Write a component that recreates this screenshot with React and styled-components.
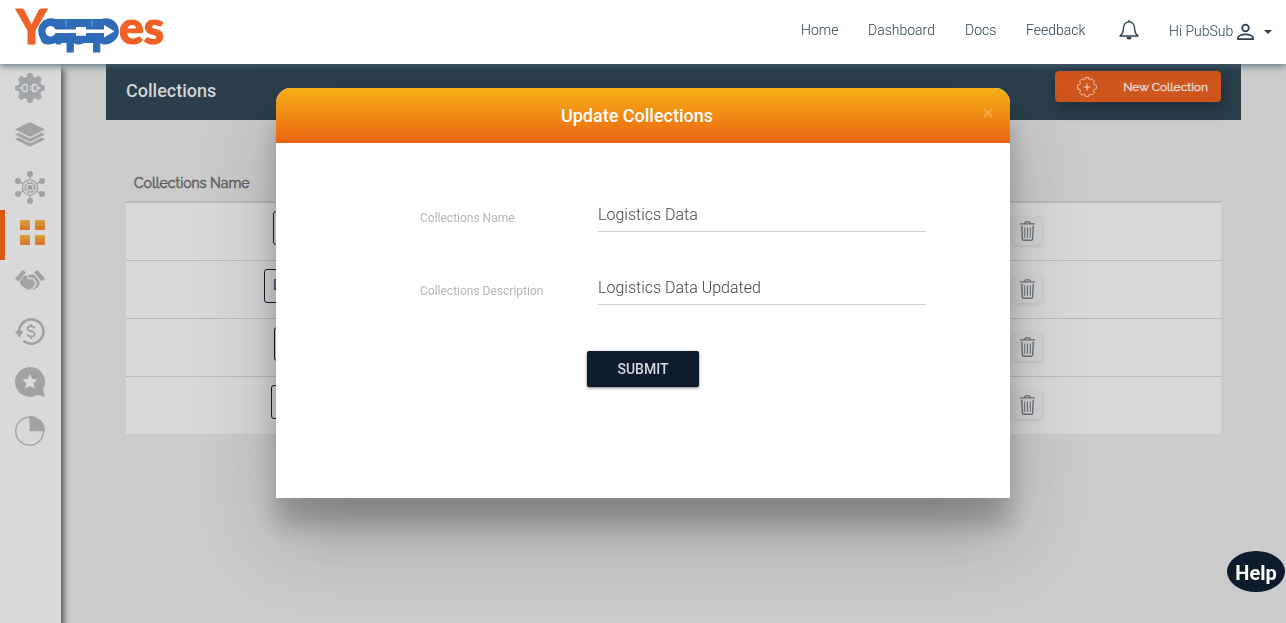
import React from "react";
import styled, { createGlobalStyle } from "styled-components";

const GlobalStyle = createGlobalStyle`
  * { box-sizing: border-box; }
  html, body { margin: 0; padding: 0; }
  body {
    background: #cbcbcb;
    font-family: Roboto, "Liberation Sans", sans-serif;
    overflow: hidden;
  }
  svg { display: block; overflow: visible; }
`;

const Page = styled.div`
  height: 100vh;
  display: flex;
  flex-direction: column;
`;

const Header = styled.header`
  position: relative;
  z-index: 3;
  flex: none;
  height: 64px;
  display: flex;
  justify-content: space-between;
  background: #fff;
  box-shadow: 0 1px 8px #46606f;
`;

const Nav = styled.nav`
  display: flex;
  align-items: flex-start;
  padding: 20px 14px 0 0;
  color: #2c4251;
  font-weight: 300;
  font-size: 14px;
  line-height: 21px;
`;

const NavLink = styled.a`
  width: ${(p) => p.$width}px;
  margin-right: 30px;
  white-space: nowrap;
`;

const Bell = styled.span`
  margin: 0 30px 0 3px;
`;

const UserMenu = styled.span`
  display: flex;
  padding-top: 1px;
  white-space: nowrap;
`;

const UserName = styled.span`
  width: 65px;
  margin-right: 3px;
`;

const UserGlyph = styled.svg`
  margin-top: 2px;
`;

const Caret = styled.span`
  margin: 9px 0 0 10px;
  border: 4px solid transparent;
  border-top-color: #2c4251;
  border-bottom: 0;
  height: 4px;
`;

const Body = styled.div`
  flex: 1;
  display: flex;
`;

const Sidebar = styled.aside`
  position: relative;
  z-index: 2;
  width: 61px;
  background: #d9d9d9;
  box-shadow: 2px 6px 6px 1px #555;
`;

const SideItem = styled.div`
  margin-top: ${(p) => p.$gap}px;
  padding-left: 15px;
`;

const ActiveItem = styled.div`
  height: 50px;
  margin-top: 6px;
  padding: 10px 0 0 15px;
  border-left: 5px solid #dd580f;
`;

const Main = styled.main`
  flex: 1;
  padding: 0 45px;
`;

const Banner = styled.div`
  height: 56px;
  padding: 7px 20px 0;
  display: flex;
  justify-content: space-between;
  background: #2a3e4b;
`;

const Title = styled.h1`
  margin: 10px 0 0;
  color: #d2d5d6;
  font-size: 18px;
  font-weight: 500;
  line-height: 20px;
`;

const NewButton = styled.button`
  display: flex;
  align-items: center;
  width: 166px;
  height: 31px;
  padding: 0 13px 0 22px;
  justify-content: space-between;
  border: 0;
  border-radius: 4px;
  background: #ce551b;
  color: #e5dcd5;
  font: 400 12px/16px Raleway, Lato, sans-serif;
  -webkit-text-stroke: 0.4px;
  box-shadow: 4px 8px 16px rgba(0, 0, 0, 0.2);
  white-space: nowrap;
`;

const Table = styled.section`
  margin: 50px 20px 0;
`;

const TableHead = styled.div`
  height: 33px;
  padding: 3px 8px 0;
  border-bottom: 2px solid #b9b9b9;
  color: #606060;
  font: 400 14px/20px Raleway, Lato, sans-serif;
  -webkit-text-stroke: 0.5px;
`;

const Row = styled.div`
  display: flex;
  justify-content: space-between;
  align-items: flex-start;
  height: ${(p) => (p.$first ? 57 : 58)}px;
  padding: 8px 179px 0 ${(p) => p.$indent}px;
  background: #d9d9d9;
  border-top: ${(p) => (p.$first ? 0 : 1)}px solid #b9b9b9;
`;

const Tag = styled.div`
  width: 60px;
  height: 34px;
  padding-left: 8px;
  border: 1px solid #0d1b2d;
  border-radius: 3px;
  color: #123a7a;
  font-size: 14px;
  line-height: 31px;
`;

const TrashButton = styled.button`
  display: flex;
  align-items: center;
  justify-content: center;
  width: 29px;
  height: 28px;
  margin-top: 6px;
  padding: 0;
  border: 0;
  border-radius: 3px;
  background: #d4d4d4;
  box-shadow: 0 1px 4px rgba(0, 0, 0, 0.14);
`;

const Overlay = styled.div`
  position: fixed;
  inset: 0;
  z-index: 2;
  display: flex;
  justify-content: center;
  align-items: flex-start;
  padding-top: 88px;
`;

const Modal = styled.div`
  width: 734px;
  height: 410px;
  border-radius: 15px 15px 0 0;
  background: #fff;
  box-shadow: 0 27px 24px rgba(0, 0, 0, 0.2), 0 40px 77px rgba(0, 0, 0, 0.22);
`;

const ModalHeader = styled.div`
  display: grid;
  grid-template-columns: 40px 1fr 40px;
  height: 55px;
  border-radius: 15px 15px 0 0;
  background: linear-gradient(#f5b016, #eb6310);
`;

const ModalTitle = styled.h2`
  grid-column: 2;
  margin: 0;
  padding-right: 12px;
  text-align: center;
  color: #fff;
  font-size: 18px;
  font-weight: 500;
  line-height: 56px;
`;

const Close = styled.span`
  padding: 20px 0 0 13px;
`;

const Form = styled.form`
  padding: 53px 84px 0 144px;
`;

const Field = styled.label`
  display: grid;
  grid-template-columns: 178px 328px;
  height: 36px;
  margin-bottom: 37px;
`;

const Label = styled.span`
  padding-top: 12px;
  color: #b5b5b5;
  font-size: 12px;
  line-height: 20px;
`;

const Value = styled.span`
  height: 36px;
  border-bottom: 1px solid #d0d0d0;
  color: #444;
  font-size: 16px;
  font-weight: 300;
  line-height: 38px;
`;

const Submit = styled.button`
  display: block;
  width: 112px;
  height: 36px;
  margin: 46px 0 0 167px;
  padding: 0;
  border: 0;
  border-radius: 2px;
  background: #0d1b2d;
  color: #d5d8dc;
  font: 500 14px/36px Roboto, sans-serif;
  box-shadow: 0 1px 3px rgba(0, 0, 0, 0.5);
`;

const Help = styled.button`
  position: fixed;
  z-index: 4;
  right: 1px;
  bottom: 31px;
  width: 58px;
  height: 41px;
  padding: 3px 0 0;
  border: 0;
  border-radius: 50%;
  background: #0d1b2d;
  color: #fff;
  font: 700 20px/38px Roboto, sans-serif;
`;

const GRAY = "#a2a2a2";

const Logo = () => (
  <svg width="180" height="64" fontFamily="Lato, sans-serif" fontWeight="900">
    <text x="16" y="44" fontSize="48" fill="#f16024" stroke="#f16024" strokeWidth="0.8" textLength="31" lengthAdjust="spacingAndGlyphs">Y</text>
    <g fill="#2f6bb8">
      <circle cx="51" cy="31" r="12.800" />
      <rect x="51" y="19" width="55" height="24" />
      <circle cx="106" cy="31" r="12.800" />
    </g>
    <text x="40 64.500 91" y="43.500" fontSize="45" fill="#2f6bb8" stroke="#2f6bb8" strokeWidth="1">app</text>
    <text x="119" y="44" fontSize="46" fill="#f16024" stroke="#f16024" strokeWidth="1.200" textLength="45" lengthAdjust="spacingAndGlyphs">es</text>
    <path d="M66 18.500v8M92 18.500v8" stroke="#7fa9dc" strokeWidth="0.800" />
    <path d="M55.500 29.500H76V27h10v2.500h18V25l10.500 6.200L104 37.500V33H86v2.800H76V33H55.500a5.200 5.200 0 1 1 0-3.500Z" fill="#fff" />
  </svg>
);

const BellIcon = () => (
  <svg width="20" height="20" viewBox="0 0 20 20" fill="none" stroke="#2c4251" strokeWidth="1.4" strokeLinejoin="round">
    <path d="M1 16c2.200-1.600 3-3.200 3.200-6C4.400 5 6 1.900 10 1.900S15.600 5 15.800 10c.2 2.800 1 4.400 3.200 6Z" />
    <path d="M7.500 17h5a2.500 2.500 0 0 1-5 0Z" fill="#2c4251" stroke="none" />
    <path d="M10 0v2" />
  </svg>
);

const UserIcon = () => (
  <UserGlyph width="17" height="18" viewBox="0 0 17 18" fill="none" stroke="#2c4251" strokeWidth="1.800">
    <circle cx="8.500" cy="5" r="3.300" />
    <path d="M1 16.200v-1.600c0-2 4.200-3.200 7.500-3.200s7.500 1.200 7.500 3.200v1.600Z" />
  </UserGlyph>
);

const spokes = [0, 45, 90, 135, 180, 225, 270, 315];

const PlugGear = () => (
  <svg width="30" height="30" viewBox="0 0 30 30">
    <g fill="#a1a5a9">
      <circle cx="15" cy="15" r="11.800" />
      {spokes.map((a) => (
        <rect key={a} x="12" y="0" width="6" height="6" rx="2.200" transform={`rotate(${a} 15 15)`} />
      ))}
    </g>
    <g fill="none" stroke="#d9d9d9" strokeWidth="1.300">
      <path d="M12 11.500H10.500a3.500 3.500 0 0 0 0 7H12ZM4.500 15H7M18 11.500h1.500a3.500 3.500 0 0 1 0 7H18ZM23 15h2.500M15 13.300h3M15 16.700h3" />
    </g>
  </svg>
);

const LayersIcon = () => (
  <svg width="30" height="25" viewBox="0 0 30 25" fill={GRAY}>
    <path d="M15 0 30 7.500 15 15 0 7.500Z" />
    <path d="M0 12.500 3.500 10.800 15 16.500 26.500 10.800 30 12.500 15 20Z" />
    <path d="M0 17.300 3.500 15.600 15 21.300 26.500 15.600 30 17.300 15 24.800Z" />
  </svg>
);

const hubNodes = [[15, 3], [27, 10], [27, 23], [15, 30], [3, 23], [3, 10]];

const HubIcon = () => (
  <svg width="30" height="33" viewBox="0 0 30 33" fill="none" stroke={GRAY}>
    {hubNodes.map(([x, y]) => (
      <g key={`${x}-${y}`}>
        <circle cx={x} cy={y} r="3" fill={GRAY} stroke="none" />
        <path d={`M${x} ${y}L${15 + (x - 15) * 0.6} ${16.5 + (y - 16.5) * 0.6}`} strokeWidth="1.500" />
      </g>
    ))}
    <circle cx="15" cy="16.500" r="7.600" strokeWidth="1.300" />
    <circle cx="15" cy="16.500" r="5" strokeWidth="1.700" strokeDasharray="2.700 1.230" />
    <circle cx="15" cy="16.500" r="4.200" strokeWidth="0.800" />
    <circle cx="15" cy="16.500" r="2.500" fill={GRAY} stroke="none" />
  </svg>
);

const GridIcon = () => (
  <svg width="25" height="25" viewBox="0 0 25 25">
    <defs>
      <linearGradient id="tile" x1="0" y1="0" x2="0" y2="1">
        <stop offset="0" stopColor="#daa039" />
        <stop offset="1" stopColor="#d8722b" />
      </linearGradient>
    </defs>
    {[[0, 0], [15, 0], [0, 15], [15, 15]].map(([x, y]) => (
      <rect key={`${x}-${y}`} x={x} y={y} width="10" height="10" rx="1" fill="url(#tile)" />
    ))}
  </svg>
);

const HandshakeIcon = () => (
  <svg width="30" height="20" viewBox="0 0 30 20" fill={GRAY}>
    <path d="M7.500 0 11 2.200 3.500 11.500 0 8.700Z" />
    <path d="M22.500 0 19 2.200 26.500 11.500 30 8.700Z" />
    <path d="M9.500 5.500 12.500 5.200 11.800 8.300 14.500 9.500 17.500 9 20 12.500C21 15 18.500 16.500 17.500 17.500 16 19.500 14 20.200 12 19.300L6.500 15.500C4.500 13.500 5 11 5.500 9.800Z" />
    <path d="M13 5.500c2-1 4.500-1.200 6.500-.5l4.800 6c1.500 3.300-1.600 7.200-5.800 8.800l-1.500-.6c3.700-1.600 5.300-4.200 4.400-7.400L18.500 7.700l-5 .3Z" />
  </svg>
);

const RefundIcon = () => (
  <svg width="30" height="27" viewBox="0 0 30 27" fill="none" stroke={GRAY}>
    <path d="M4.200 15A12.200 12.200 0 1 1 8.400 22.800" strokeWidth="2.500" />
    <path d="M0 13h8.500L4.300 19.800Z" fill={GRAY} stroke="none" />
    <path d="M19.500 10.300c-.5-1.300-1.700-2-3.400-2-2 0-3.400.9-3.400 2.400 0 3.500 7 1.500 7 5.300 0 1.600-1.500 2.600-3.600 2.600-1.900 0-3.200-.9-3.700-2.400M16.100 6v2.300M16.100 18.600v2.300" strokeWidth="1.900" />
  </svg>
);

const StarBubbleIcon = () => (
  <svg width="30" height="30" viewBox="0 0 30 30">
    <path d="M15 0a15 15 0 0 1 13 22.500L30 30l-7.500-2A15 15 0 1 1 15 0Z" fill={GRAY} />
    <path d="m15 7 2.300 4.800 5.200.7-3.800 3.700.9 5.300L15 19l-4.600 2.500.9-5.300-3.800-3.700 5.200-.7Z" fill="#d9d9d9" />
  </svg>
);

const PieIcon = () => (
  <svg width="30" height="30" viewBox="0 0 30 30">
    <circle cx="14.600" cy="15.200" r="13.900" fill="none" stroke={GRAY} strokeWidth="1.400" />
    <path d="M14.500 0A15 15 0 0 1 30 15.300H14.500Z" fill={GRAY} />
  </svg>
);

const GearPlusIcon = () => (
  <svg width="20" height="20" viewBox="0 0 20 20" fill="none" stroke="#ebc1a9" strokeWidth="1">
    <path
      strokeLinejoin="round"
      d="M8.200.6h3.600v1.500l1.700.7 1.500-1 2.500 2.500-1.100 1.500.8 1.900 2.200.4v3.700l-2.200.5-.8 1.800 1.100 1.600-2.500 2.500-1.500-1-1.700.7v1.500H8.200v-1.500l-1.700-.7-1.500 1-2.500-2.500 1.100-1.600-.8-1.800-2.200-.5V8.100l2.200-.4.8-1.900-1.100-1.500L5 1.800l1.500 1 1.700-.7Z"
    />
    <path d="M10 6.500v7M6.500 10h7" stroke="#edd8cb" />
  </svg>
);

const TrashIcon = () => (
  <svg width="15" height="20" viewBox="0 0 15 20" fill="none" stroke="#6c737c" strokeWidth="1.100">
    <path d="M0 2.900h15M4.800 2.500c0-1.400.8-1.900 2.700-1.900s2.700.5 2.700 1.900" strokeWidth="1.400" />
    <path d="M1.700 4.700 2.400 18q.1 1.200 1.300 1.200h7.600q1.200 0 1.300-1.200l.7-13.300" strokeWidth="1.400" />
    <path d="M4.700 6.500v10.200M7.500 6.500v10.200M10.300 6.500v10.200" />
  </svg>
);

const sideIcons = {
  before: [[PlugGear, 9], [LayersIcon, 19], [HubIcon, 24]],
  after: [[HandshakeIcon, 10], [RefundIcon, 28], [StarBubbleIcon, 22], [PieIcon, 19]],
};

const links = [["Home", 37], ["Dashboard", 67], ["Docs", 31], ["Feedback", 60]];
const rows = [[147, ""], [138, "D"], [148, ""], [145, ""]];

export default function App() {
  return (
    <Page>
      <GlobalStyle />
      <Header>
        <Logo />
        <Nav>
          {links.map(([name, width]) => (
            <NavLink key={name} $width={width}>{name}</NavLink>
          ))}
          <Bell><BellIcon /></Bell>
          <UserMenu>
            <UserName>Hi PubSub</UserName>
            <UserIcon />
            <Caret />
          </UserMenu>
        </Nav>
      </Header>
      <Body>
        <Sidebar>
          {sideIcons.before.map(([Icon, gap], i) => (
            <SideItem key={i} $gap={gap}><Icon /></SideItem>
          ))}
          <ActiveItem><GridIcon /></ActiveItem>
          {sideIcons.after.map(([Icon, gap], i) => (
            <SideItem key={i} $gap={gap}><Icon /></SideItem>
          ))}
        </Sidebar>
        <Main>
          <Banner>
            <Title>Collections</Title>
            <NewButton>
              <GearPlusIcon />
              New Collection
            </NewButton>
          </Banner>
          <Table>
            <TableHead>Collections Name</TableHead>
            {rows.map(([indent, name], i) => (
              <Row key={i} $first={i === 0} $indent={indent}>
                <Tag>{name}</Tag>
                <TrashButton><TrashIcon /></TrashButton>
              </Row>
            ))}
          </Table>
        </Main>
      </Body>
      <Overlay>
        <Modal>
          <ModalHeader>
            <ModalTitle>Update Collections</ModalTitle>
            <Close>
              <svg width="10" height="10" viewBox="0 0 11 11" stroke="#f4a540" strokeWidth="2.800">
                <path d="m1 1 9 9M10 1l-9 9" />
              </svg>
            </Close>
          </ModalHeader>
          <Form>
            <Field><Label>Collections Name</Label><Value>Logistics Data</Value></Field>
            <Field><Label>Collections Description</Label><Value>Logistics Data Updated</Value></Field>
            <Submit type="button">SUBMIT</Submit>
          </Form>
        </Modal>
      </Overlay>
      <Help>Help</Help>
    </Page>
  );
}
